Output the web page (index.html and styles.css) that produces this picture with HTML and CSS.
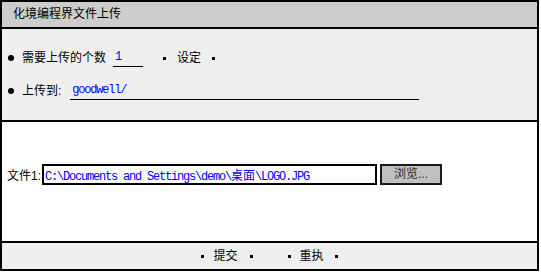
FILE: index.html
```html
<!DOCTYPE html>
<html lang="zh-CN">
<head>
<meta charset="utf-8">
<title>化境编程界文件上传</title>
<link rel="stylesheet" href="styles.css">
</head>
<body>
<div class="panel">
  <div class="head">化境编程界文件上传</div>
  <div class="settings">
    <div class="row">
      <span class="dot"></span>
      <span class="txt">需要上传的个数</span>
      <span class="field count">1</span>
      <span class="sq sq-first"></span>
      <span class="txt">设定</span>
      <span class="sq sq-last"></span>
    </div>
    <div class="row">
      <span class="dot"></span>
      <span class="txt">上传到:</span>
      <span class="field path">goodwell/</span>
    </div>
  </div>
  <div class="files">
    <div class="file-row">
      <span class="label">文件1:</span>
      <span class="input">C:\Documents and Settings\demo\<span class="cjk">桌面</span>\LOGO.JPG</span>
      <span class="btn">浏览...</span>
    </div>
  </div>
  <div class="foot">
    <span class="action"><span class="sq sq-first"></span><span class="txt">提交</span><span class="sq sq-last"></span></span>
    <span class="action"><span class="sq sq-first"></span><span class="txt">重执</span><span class="sq sq-last2"></span></span>
  </div>
</div>
</body>
</html>
```

FILE: styles.css
```css
html, body {
  margin: 0;
  padding: 0;
  background: #ffffff;
}

body {
  font-family: "Liberation Sans", "Noto Sans CJK SC", sans-serif;
  font-size: 12px;
  color: #000;
}

.panel {
  width: 539px;
  box-sizing: border-box;
  border: 2px solid #000;
}

.head {
  height: 25px;
  line-height: 25px;
  padding-left: 11px;
  background: #cdcdcd;
  border-bottom: 2px solid #000;
}

.settings {
  height: 93px;
  box-sizing: border-box;
  padding: 19px 0 0 6px;
  background: #efefef;
  border-bottom: 2px solid #000;
  display: flex;
  flex-direction: column;
  gap: 13px;
}

.row {
  display: flex;
  align-items: center;
  height: 20px;
  line-height: 20px;
}

.dot {
  width: 6px;
  height: 6px;
  border-radius: 50%;
  background: #000;
  margin-right: 8px;
}

.field {
  align-self: flex-start;
  height: 18px;
  line-height: 18px;
  border-bottom: 1px solid #000;
  box-sizing: content-box;
  color: #0000ff;
  font-family: "Liberation Mono", "Noto Sans CJK SC", monospace;
  letter-spacing: -1.2px;
  padding-left: 2px;
}

.count {
  width: 28px;
  margin-left: 7px;
}

.path {
  width: 347px;
  margin-left: 9px;
}

.sq {
  width: 3px;
  height: 3px;
  background: #000;
}

.settings .sq-first {
  margin-left: 20px;
  margin-right: 11px;
}

.settings .sq-last {
  margin-left: 11px;
}

.files {
  height: 121px;
  box-sizing: border-box;
  padding: 42px 0 0 5px;
  background: #ffffff;
  border-bottom: 2px solid #000;
}

.file-row {
  display: flex;
  align-items: center;
}

.label {
  padding-top: 3px;
  margin-right: 1px;
  line-height: 16px;
}

.input {
  width: 335px;
  height: 21px;
  line-height: 17px;
  box-sizing: border-box;
  border: 2px solid #000;
  padding-left: 1px;
  background: #fff;
  color: #0000ff;
  font-family: "Liberation Mono", "Noto Sans CJK SC", monospace;
  letter-spacing: -1.2px;
  white-space: pre;
  overflow: hidden;
}

.cjk {
  font-family: "Noto Sans CJK SC", sans-serif;
  letter-spacing: 0;
}

.btn {
  width: 62px;
  height: 21px;
  line-height: 17px;
  box-sizing: border-box;
  margin-left: 3px;
  border: 2px solid #1a1a1a;
  background: #c0c0c0;
  color: #2a2a2a;
  text-align: center;
}

.foot {
  height: 26px;
  background: #eeeeee;
  display: flex;
  justify-content: center;
  align-items: center;
  gap: 35px;
}

.action {
  display: flex;
  align-items: center;
  line-height: 20px;
}

.foot .sq-first {
  margin-right: 9px;
}

.foot .sq-last {
  margin-left: 12px;
}

.foot .sq-last2 {
  margin-left: 11px;
}
```
